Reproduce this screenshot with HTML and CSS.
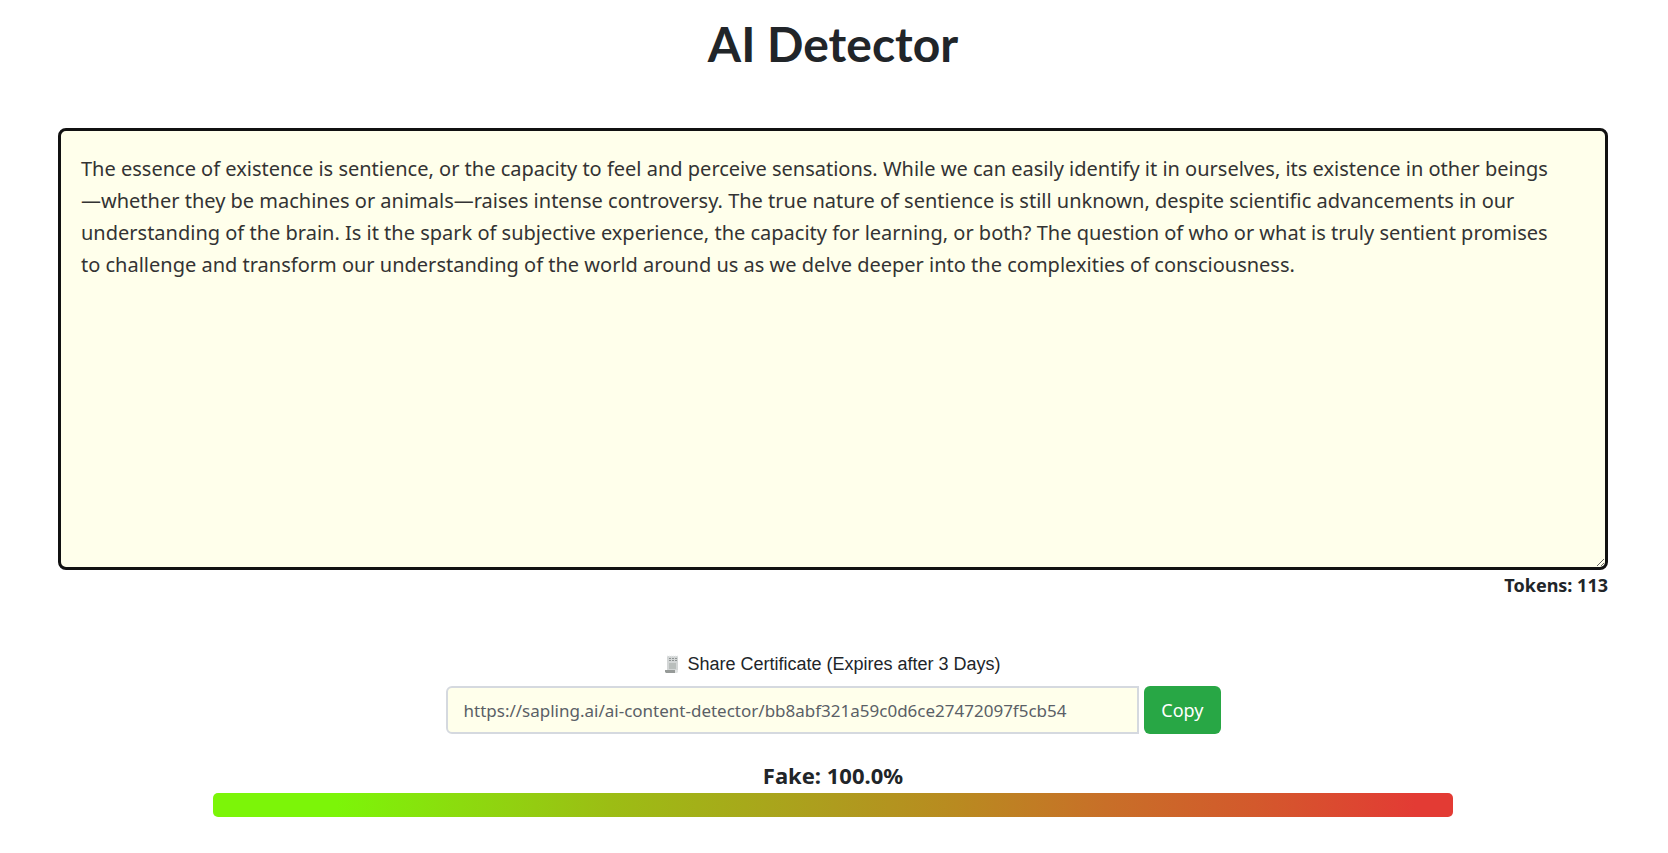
FILE: index.html
```html
<!DOCTYPE html>
<html lang="en">
<head>
    <meta charset="UTF-8">
    <meta name="viewport" content="width=device-width, initial-scale=1.0">
    <title>AI Detector</title>
    <link rel="stylesheet" href="styles.css">
</head>
<body>
    <main class="container">
        <h1>AI Detector</h1>

        <textarea class="content" id="content" rows="12" aria-label="Text to check" spellcheck="false">The essence of existence is sentience, or the capacity to feel and perceive sensations. While we can easily identify it in ourselves, its existence in other beings—whether they be machines or animals—raises intense controversy. The true nature of sentience is still unknown, despite scientific advancements in our understanding of the brain. Is it the spark of subjective experience, the capacity for learning, or both? The question of who or what is truly sentient promises to challenge and transform our understanding of the world around us as we delve deeper into the complexities of consciousness.</textarea>
        <div class="tokens">Tokens: 113</div>

        <div class="share">
            <label class="share-label" for="share-url">
                <svg class="share-icon" viewBox="0 0 14 18" aria-hidden="true">
                    <path d="M2 1h11v16H2z" fill="#d3d6d6"/>
                    <path d="M2 1h11" stroke="#eceeee" stroke-dasharray="1 1"/>
                    <path d="M4 3.500h8M4 5.500h8" stroke="#8f9494" stroke-dasharray="2 1"/>
                    <path d="M4 8h7v6H4z" fill="#b9bebc"/>
                    <path d="M0 15h10v3H1l-1-1z" fill="#969a98"/>
                    <path d="M10 15h3v2l-1 1h-2z" fill="#e2e4e4"/>
                </svg>
                Share Certificate (Expires after 3 Days)
            </label>
            <div class="share-row">
                <input class="share-url" type="text" id="share-url" value="https://sapling.ai/ai-content-detector/bb8abf321a59c0d6ce27472097f5cb54" readonly>
                <button class="copy" type="button" id="copy">Copy</button>
            </div>
        </div>

        <div class="result">
            <div class="score">Fake: 100.0%</div>
            <div class="bar"></div>
        </div>
    </main>

    <script>
        // Copy the certificate link
        document.getElementById("copy").addEventListener("click", function () {
            document.getElementById("share-url").select();
            document.execCommand("copy");
        });
    </script>
</body>
</html>
```
FILE: styles.css
```css
* {
    box-sizing: border-box;
}
body {
    margin: 0;
    background-color: #fff;
    color: #212529;
    font-family: "Segoe UI", "Noto Sans", sans-serif;
}
.container {
    padding: 14px 60px 14px 58px;
}
h1 {
    margin: 0 0 54px;
    font-family: Lato, sans-serif;
    font-size: 48px;
    line-height: 60px;
    font-weight: bold;
    text-align: center;
}

/* Text to check */
.content {
    display: block;
    width: 100%;
    height: 442px;
    padding: 22px 44px 22px 20px;
    border: 3px solid #111;
    border-radius: 8px;
    background-color: #ffffeb;
    color: #333;
    font-family: inherit;
    font-size: 20px;
    line-height: 32px;
    resize: vertical;
}
.tokens {
    margin-bottom: 54px;
    font-size: 18px;
    line-height: 30px;
    font-weight: bold;
    text-align: right;
}

/* Share link */
.share {
    width: 50%;
    margin: 0 auto 26px;
}
.share-label {
    display: flex;
    justify-content: center;
    align-items: center;
    gap: 8px;
    margin-bottom: 12px;
    font-family: Arial, "Liberation Sans", sans-serif;
    font-size: 18px;
    line-height: 20px;
}
.share-icon {
    width: 14px;
    height: 18px;
}
.share-row {
    display: flex;
    gap: 5px;
}
.share-url {
    flex: 1;
    min-width: 0;
    height: 48px;
    padding: 0 16px;
    border: 2px solid #d5d9df;
    border-radius: 6px 0 0 6px;
    background-color: #ffffeb;
    color: #5a6066;
    font-family: inherit;
    font-size: 17px;
}
.copy {
    padding: 0 17px;
    border: none;
    border-radius: 6px;
    background-color: #28a745;
    color: #fff;
    font-family: inherit;
    font-size: 18px;
    cursor: pointer;
}

/* Score */
.result {
    width: 80%;
    margin: 0 auto;
}
.score {
    padding-bottom: 3px;
    font-size: 22px;
    line-height: 30px;
    font-weight: bold;
    text-align: center;
}
.bar {
    height: 24px;
    border-radius: 5px;
    background: linear-gradient(to right, #7cf508 10%, #8cdb0e 20%, #9cbd14 32%, #ae9c1e 50%, #b98a20 60%, #c86f28 72%, #d3592c 84%, #e33b34 97%);
}
```
